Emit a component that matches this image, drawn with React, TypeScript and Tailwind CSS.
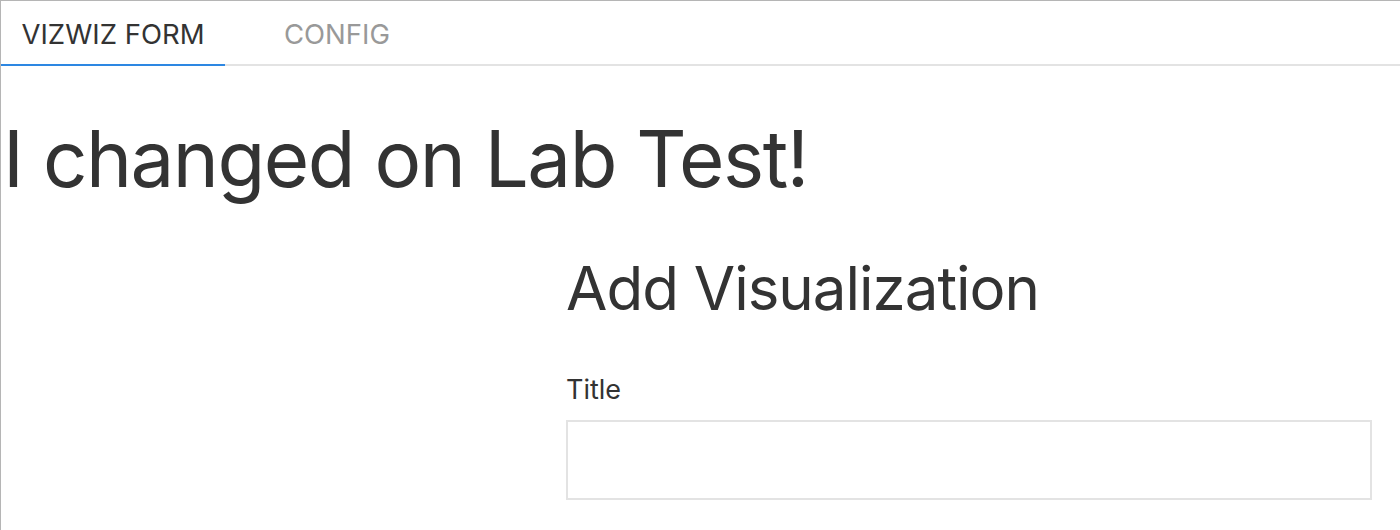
import React from 'react';

const App: React.FC = () => {
  return (
    <div
      className="w-[1400px] h-[530px] overflow-hidden bg-white border-l border-t border-[#b5b5b5] text-[#333333]"
      style={{ fontFamily: 'Inter, "Noto Sans", sans-serif' }}
    >
      {/* Tabs */}
      <div className="flex border-b-2 border-[#e3e3e3] h-[65px]">
        <div className="w-[224px] flex items-center justify-center border-b-2 border-[#2d87e2] -mb-[2px] pt-[4px] text-[27.5px] text-[#333]">
          VIZWIZ FORM
        </div>
        <div className="w-[224px] flex items-center justify-center pt-[4px] text-[27.5px] text-[#999999]">
          CONFIG
        </div>
      </div>

      <h1 className="text-[78px] leading-none mt-[54px] ml-[2px] tracking-[-1.5px]">I changed on Lab Test!</h1>

      <div className="flex mt-[60px]">
        <div className="w-[565px] shrink-0" />
        <div className="flex-1 pr-[28px]">
          <h2 className="text-[60px] leading-none tracking-[-1px]">Add Visualization</h2>
          <label className="block text-[27px] mt-[58px] leading-none">Title</label>
          <input className="mt-[17px] w-full h-[80px] border-2 border-[#e3e3e3] outline-none" />
        </div>
      </div>
    </div>
  );
};

export default App;
